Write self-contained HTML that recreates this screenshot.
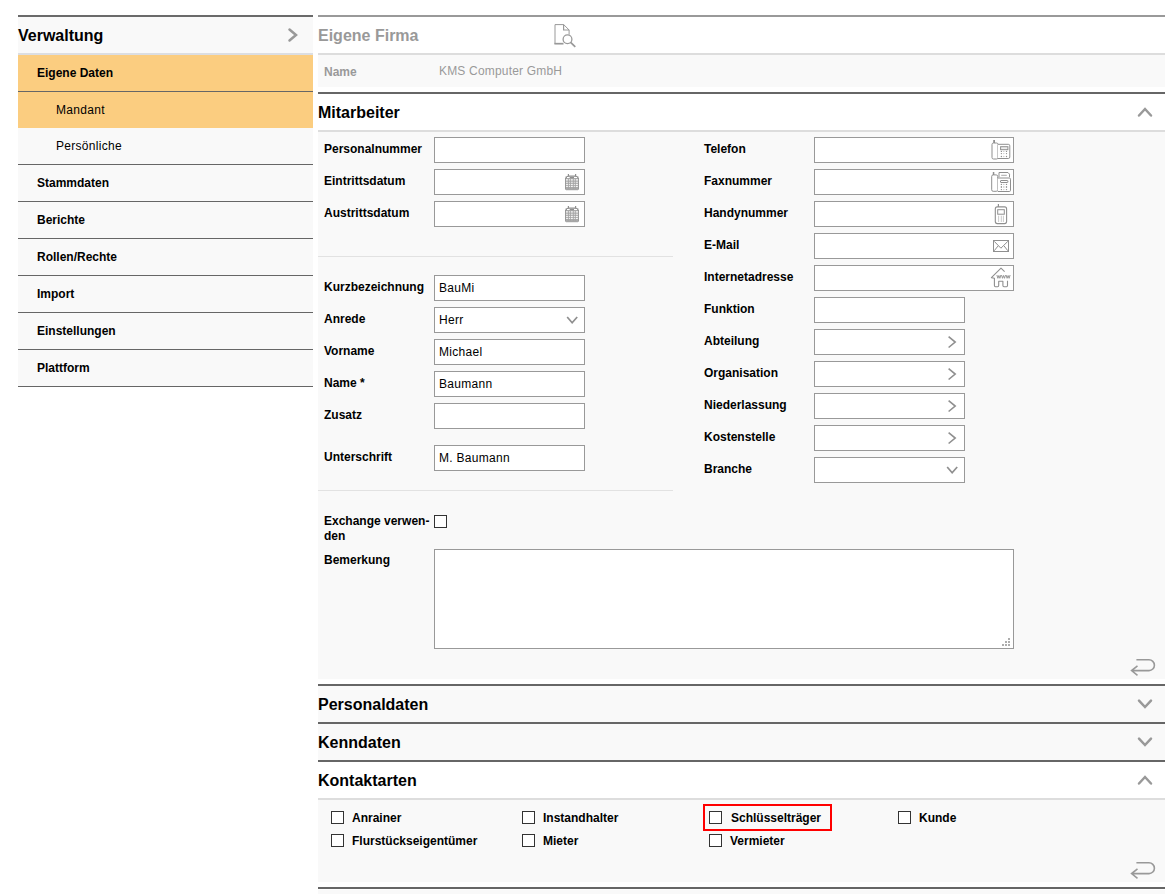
<!DOCTYPE html>
<html><head><meta charset="utf-8">
<style>
*{box-sizing:border-box;margin:0;padding:0}
html,body{width:1167px;height:894px;overflow:hidden;background:#fff}
body{position:relative;font-family:"Liberation Sans",sans-serif;color:#000;font-size:12px}
.a{position:absolute}
.sb{left:18px;width:295px}
.row{position:absolute;left:18px;width:295px;height:36px;line-height:36px;font-size:12px;background:#f9f9f9}
.row.b{font-weight:bold;padding-left:19px}
.row.l2{padding-left:38px;letter-spacing:0.3px}
.row.or{background:#fbcd80}
.hl{position:absolute;left:18px;width:295px;height:1px;background:#666}
.m{left:318px;width:847px}
.dk{position:absolute;left:318px;width:847px;height:2px;background:#666}
.lt{position:absolute;left:318px;width:847px;height:2px;background:#dddddd}
.f9{position:absolute;left:318px;width:847px;background:#f9f9f9}
.hd{position:absolute;left:318px;width:847px;height:36px;line-height:36px;padding-top:1px;font-size:16px;font-weight:bold}
.lb{position:absolute;height:26px;line-height:26px;font-weight:bold;font-size:12px;white-space:nowrap}
.in{position:absolute;height:26px;border:1px solid #999;background:#fff;line-height:24px;padding-left:4px;font-size:12px;letter-spacing:0.3px}
.w151{width:151px}.w200{width:200px}
.cb{position:absolute;width:13px;height:13px;border:1px solid #333;background:#fff}
.ct{position:absolute;font-weight:bold;font-size:12px;line-height:14px;white-space:nowrap}
svg{position:absolute;overflow:visible}
</style></head><body>

<!-- SIDEBAR -->
<div class="a sb" style="top:15px;height:2px;background:#6a6a6a"></div>
<div class="row" style="top:17px;font-size:16px;font-weight:bold;padding-top:1px">Verwaltung</div>
<svg style="left:286px;top:26px" width="14" height="18"><path d="M3.5 3.5L10 9L3.5 14.5" fill="none" stroke="#999" stroke-width="2.5" stroke-linecap="round"/></svg>
<div class="a sb" style="top:53px;height:2px;background:#dcdee2"></div>
<div class="row b or" style="top:55px">Eigene Daten</div>
<div class="hl" style="top:91px"></div>
<div class="row l2 or" style="top:92px">Mandant</div>
<div class="row l2" style="top:128px">Persönliche</div>
<div class="hl" style="top:164px"></div>
<div class="row b" style="top:165px">Stammdaten</div>
<div class="hl" style="top:201px"></div>
<div class="row b" style="top:202px">Berichte</div>
<div class="hl" style="top:238px"></div>
<div class="row b" style="top:239px">Rollen/Rechte</div>
<div class="hl" style="top:275px"></div>
<div class="row b" style="top:276px">Import</div>
<div class="hl" style="top:312px"></div>
<div class="row b" style="top:313px">Einstellungen</div>
<div class="hl" style="top:349px"></div>
<div class="row b" style="top:350px">Plattform</div>
<div class="hl" style="top:386px"></div>

<!-- MAIN -->
<div class="a m" style="top:15px;height:2px;background:#999"></div>
<div class="hd" style="top:17px;color:#999">Eigene Firma</div>
<svg style="left:554px;top:24px" width="24" height="24"><path d="M1 19.9V0.6H9.7L15.1 6V10.5" fill="none" stroke="#999" stroke-width="1"/><path d="M0.4 19.7H9.5" stroke="#999" stroke-width="1.7"/><path d="M9.6 0.6V6H15.1" fill="none" stroke="#999" stroke-width="1.2"/><circle cx="13.5" cy="15.2" r="4.4" fill="#fff" stroke="#999" stroke-width="1.3"/><path d="M16.6 18.3L21.3 22.9" stroke="#999" stroke-width="1.7"/></svg>
<div class="lt" style="top:53px"></div>
<div class="f9" style="top:55px;height:32px"></div>
<div class="lb" style="left:324px;top:59px;color:#999">Name</div>
<div class="a" style="left:439px;top:58px;height:26px;line-height:26px;color:#999;letter-spacing:0.18px">KMS Computer GmbH</div>

<div class="dk" style="top:92px"></div>
<div class="hd" style="top:94px">Mitarbeiter</div>
<svg style="left:1136px;top:105px" width="18" height="14"><path d="M3 10.5L9 4L15 10.5" fill="none" stroke="#999" stroke-width="2.5" stroke-linecap="round"/></svg>
<div class="lt" style="top:130px"></div>
<div class="f9" style="top:132px;height:547px"></div>

<!-- left column -->
<div class="lb" style="left:324px;top:136px">Personalnummer</div>
<div class="in w151" style="left:434px;top:137px"></div>
<div class="lb" style="left:324px;top:168px">Eintrittsdatum</div>
<div class="in w151" style="left:434px;top:169px"></div>
<div class="lb" style="left:324px;top:200px">Austrittsdatum</div>
<div class="in w151" style="left:434px;top:201px"></div>

<div class="a" style="left:318px;top:256px;width:355px;height:1px;background:#e2e2e2"></div>

<div class="lb" style="left:324px;top:274px">Kurzbezeichnung</div>
<div class="in w151" style="left:434px;top:275px">BauMi</div>
<div class="lb" style="left:324px;top:306px">Anrede</div>
<div class="in w151" style="left:434px;top:307px">Herr</div>
<svg style="left:566px;top:316px" width="12" height="9"><path d="M1.2 1L6.15 6.8L11.2 1" fill="none" stroke="#8f8f8f" stroke-width="1.7"/></svg>
<div class="lb" style="left:324px;top:338px">Vorname</div>
<div class="in w151" style="left:434px;top:339px">Michael</div>
<div class="lb" style="left:324px;top:370px">Name *</div>
<div class="in w151" style="left:434px;top:371px">Baumann</div>
<div class="lb" style="left:324px;top:402px">Zusatz</div>
<div class="in w151" style="left:434px;top:403px"></div>
<div class="lb" style="left:324px;top:444px">Unterschrift</div>
<div class="in w151" style="left:434px;top:445px">M. Baumann</div>

<div class="a" style="left:318px;top:490px;width:355px;height:1px;background:#e2e2e2"></div>

<div class="ct" style="left:324px;top:514px;line-height:15px">Exchange verwen-<br>den</div>
<div class="cb" style="left:434px;top:515px"></div>
<div class="lb" style="left:324px;top:547px">Bemerkung</div>
<div class="in" style="left:434px;top:549px;width:580px;height:100px"></div>

<!-- right column -->
<div class="lb" style="left:704px;top:136px">Telefon</div>
<div class="in w200" style="left:814px;top:137px"></div>
<div class="lb" style="left:704px;top:168px">Faxnummer</div>
<div class="in w200" style="left:814px;top:169px"></div>
<div class="lb" style="left:704px;top:200px">Handynummer</div>
<div class="in w200" style="left:814px;top:201px"></div>
<div class="lb" style="left:704px;top:232px">E-Mail</div>
<div class="in w200" style="left:814px;top:233px"></div>
<div class="lb" style="left:704px;top:264px">Internetadresse</div>
<div class="in w200" style="left:814px;top:265px"></div>
<div class="lb" style="left:704px;top:296px">Funktion</div>
<div class="in w151" style="left:814px;top:297px"></div>
<div class="lb" style="left:704px;top:328px">Abteilung</div>
<div class="in w151" style="left:814px;top:329px"></div>
<div class="lb" style="left:704px;top:360px">Organisation</div>
<div class="in w151" style="left:814px;top:361px"></div>
<div class="lb" style="left:704px;top:392px">Niederlassung</div>
<div class="in w151" style="left:814px;top:393px"></div>
<div class="lb" style="left:704px;top:424px">Kostenstelle</div>
<div class="in w151" style="left:814px;top:425px"></div>
<div class="lb" style="left:704px;top:456px">Branche</div>
<div class="in w151" style="left:814px;top:457px"></div>



<div class="dk" style="top:684px"></div>
<div class="f9" style="top:686px;height:36px"></div>
<div class="hd" style="top:686px">Personaldaten</div>
<div class="dk" style="top:722px"></div>
<div class="f9" style="top:724px;height:36px"></div>
<div class="hd" style="top:724px">Kenndaten</div>
<div class="dk" style="top:760px"></div>
<div class="hd" style="top:762px">Kontaktarten</div>
<div class="lt" style="top:798px"></div>
<div class="f9" style="top:800px;height:82px"></div>

<div class="cb" style="left:331px;top:811px"></div><div class="ct" style="left:352px;top:811px">Anrainer</div>
<div class="cb" style="left:331px;top:834px"></div><div class="ct" style="left:352px;top:834px">Flurstückseigentümer</div>
<div class="cb" style="left:522px;top:811px"></div><div class="ct" style="left:543px;top:811px">Instandhalter</div>
<div class="cb" style="left:522px;top:834px"></div><div class="ct" style="left:543px;top:834px">Mieter</div>
<div class="a" style="left:703px;top:804px;width:129px;height:27px;border:2px solid #f00"></div>
<div class="cb" style="left:709px;top:811px"></div><div class="ct" style="left:731px;top:811px">Schlüsselträger</div>
<div class="cb" style="left:709px;top:834px"></div><div class="ct" style="left:730px;top:834px">Vermieter</div>
<div class="cb" style="left:898px;top:811px"></div><div class="ct" style="left:919px;top:811px">Kunde</div>

<div class="dk" style="top:887px"></div>
<div class="f9" style="top:890px;height:4px"></div>

<!-- ICONS -->
<svg style="left:565px;top:174px" width="15" height="17"><path d="M0.6 15.2V4L3 2H11L13.4 4V15.2Q13.4 15.7 12.9 15.7H1.1Q0.6 15.7 0.6 15.2Z" fill="#fff" stroke="#8f8f8f"/><rect x="0.6" y="2.4" width="12.8" height="2.5" fill="#8f8f8f"/><rect x="2" y="3" width="2.7" height="1.1" fill="#fff"/><rect x="9" y="3" width="3.1" height="1.1" fill="#fff"/><rect x="1" y="4.9" width="12" height="4.4" fill="#e6e6e6"/><rect x="1" y="13.4" width="12" height="2" fill="#ababab"/><path d="M3.4 4.9V15M5.4 4.9V15M8.3 4.9V15M10.3 4.9V15M1 7.2H13M1 9.4H13M1 11.4H13M1 13.4H13" stroke="#a3a3a3" stroke-width="0.9"/><rect x="2.8" y="0" width="1.2" height="2.5" fill="#8f8f8f"/><rect x="10" y="0" width="1.2" height="2.5" fill="#8f8f8f"/></svg>
<svg style="left:565px;top:206px" width="15" height="17"><path d="M0.6 15.2V4L3 2H11L13.4 4V15.2Q13.4 15.7 12.9 15.7H1.1Q0.6 15.7 0.6 15.2Z" fill="#fff" stroke="#8f8f8f"/><rect x="0.6" y="2.4" width="12.8" height="2.5" fill="#8f8f8f"/><rect x="2" y="3" width="2.7" height="1.1" fill="#fff"/><rect x="9" y="3" width="3.1" height="1.1" fill="#fff"/><rect x="1" y="4.9" width="12" height="4.4" fill="#e6e6e6"/><rect x="1" y="13.4" width="12" height="2" fill="#ababab"/><path d="M3.4 4.9V15M5.4 4.9V15M8.3 4.9V15M10.3 4.9V15M1 7.2H13M1 9.4H13M1 11.4H13M1 13.4H13" stroke="#a3a3a3" stroke-width="0.9"/><rect x="2.8" y="0" width="1.2" height="2.5" fill="#8f8f8f"/><rect x="10" y="0" width="1.2" height="2.5" fill="#8f8f8f"/></svg>
<svg style="left:988px;top:138px" width="25" height="24"><rect x="4" y="5" width="6" height="16" rx="1.5" fill="#fff" stroke="#8f8f8f"/><rect x="5.2" y="2" width="1.8" height="3" fill="#8f8f8f"/><path d="M10 6.3H20.3A1.5 1.5 0 0 1 21.8 7.8V19A1.5 1.5 0 0 1 20.3 20.5H10" fill="#fff" stroke="#8f8f8f"/><rect x="12.6" y="8.7" width="7.3" height="3" fill="#eee" stroke="#8f8f8f"/><g fill="#8f8f8f"><circle cx="13.4" cy="13.4" r="0.7"/><circle cx="18.5" cy="13.4" r="0.7"/><circle cx="13.4" cy="15.6" r="0.7"/><circle cx="18.5" cy="15.6" r="0.7"/><circle cx="13.4" cy="18.5" r="0.7"/><circle cx="18.5" cy="18.5" r="0.7"/></g><g fill="#c8c8c8"><circle cx="15.8" cy="13.4" r="0.7"/><circle cx="15.8" cy="15.6" r="0.7"/><circle cx="15.8" cy="18.5" r="0.7"/></g></svg>
<svg style="left:988px;top:170px" width="25" height="24"><rect x="3.7" y="4.9" width="6" height="16.4" rx="1.5" fill="#fff" stroke="#8f8f8f"/><rect x="4.8" y="2" width="1.5" height="3" fill="#8f8f8f"/><path d="M11 7.2V2.5H20L21.5 4.2V7.2" fill="#fff" stroke="#8f8f8f"/><rect x="13.2" y="4.8" width="5.6" height="1" fill="#aaa"/><path d="M9.7 8H21.3A1.2 1.2 0 0 1 22.5 9.2V20.3A1.2 1.2 0 0 1 21.3 21.5H9.7" fill="#fff" stroke="#8f8f8f"/><rect x="12.5" y="10.5" width="7.4" height="2" rx="0.5" fill="#fff" stroke="#8f8f8f"/><g fill="#8f8f8f"><circle cx="13.4" cy="14.4" r="0.7"/><circle cx="18.5" cy="14.4" r="0.7"/><rect x="12.8" y="16.2" width="1.2" height="1.6"/><rect x="17.9" y="16.2" width="1.2" height="1.6"/><circle cx="13.4" cy="19.6" r="0.7"/><circle cx="18.5" cy="19.6" r="0.7"/></g><g fill="#c8c8c8"><circle cx="15.8" cy="14.4" r="0.7"/><rect x="15.2" y="16.2" width="1.2" height="1.6"/><circle cx="15.8" cy="19.6" r="0.7"/></g></svg>
<svg style="left:990px;top:202px" width="22" height="24"><rect x="5.3" y="4.9" width="11.3" height="16.7" rx="2" fill="#fff" stroke="#8f8f8f" stroke-width="1.1"/><rect x="7.8" y="2" width="1.2" height="3" fill="#8f8f8f"/><rect x="7.7" y="7.7" width="6.6" height="4.5" fill="#fff" stroke="#8f8f8f"/><path d="M8.6 13.7V20M11.3 13.7V20M13.4 13.7V20" stroke="#c4c4c4" stroke-width="0.9"/></svg>
<svg style="left:988px;top:234px" width="26" height="24"><rect x="5.5" y="6.5" width="15" height="11" fill="#fff" stroke="#8f8f8f"/><path d="M6.2 7.3L12.9 14.2L19.9 7.3M6.2 16.8L10 12M19.9 16.8L16.1 12" fill="none" stroke="#8f8f8f" stroke-width="1"/></svg>
<svg style="left:986px;top:265px" width="28" height="26"><path d="M18.6 6.6L15 3.2L5.4 12.6L8.4 13.2V20.6Q8.4 21.7 9.5 21.7H11.6Q12.7 21.7 12.7 20.6V16.2H16.9V20.6Q16.9 21.7 18 21.7H20.4Q21.5 21.7 21.5 20.6V15.8" fill="none" stroke="#8f8f8f" stroke-width="1.1" stroke-linejoin="round"/><path d="M10.9 10L11.9 13.3L12.9 10.5L13.9 13.3L14.9 10M15.5 10L16.5 13.3L17.5 10.5L18.5 13.3L19.5 10M20.1 10L21.1 13.3L22.1 10.5L23.1 13.3L24.1 10" fill="none" stroke="#8f8f8f" stroke-width="0.9"/></svg>
<svg style="left:946px;top:334px" width="12" height="16"><path d="M2.6 2.7L9.2 8.1L2.6 13.5" fill="none" stroke="#8f8f8f" stroke-width="1.6"/></svg>
<svg style="left:946px;top:366px" width="12" height="16"><path d="M2.6 2.7L9.2 8.1L2.6 13.5" fill="none" stroke="#8f8f8f" stroke-width="1.6"/></svg>
<svg style="left:946px;top:398px" width="12" height="16"><path d="M2.6 2.7L9.2 8.1L2.6 13.5" fill="none" stroke="#8f8f8f" stroke-width="1.6"/></svg>
<svg style="left:946px;top:430px" width="12" height="16"><path d="M2.6 2.7L9.2 8.1L2.6 13.5" fill="none" stroke="#8f8f8f" stroke-width="1.6"/></svg>
<svg style="left:946px;top:466px" width="12" height="9"><path d="M1.2 1L6.15 6.8L11.2 1" fill="none" stroke="#8f8f8f" stroke-width="1.7"/></svg>
<svg style="left:1002px;top:638px" width="8" height="8" fill="#adadad"><rect x="6" y="0" width="2" height="2"/><rect x="3" y="3" width="2" height="2"/><rect x="6" y="3" width="2" height="2"/><rect x="0" y="6" width="2" height="2"/><rect x="3" y="6" width="2" height="2"/><rect x="6" y="6" width="2" height="2"/></svg>
<svg style="left:1125px;top:650px" width="40" height="30"><path d="M11.4 9.8H24A5.4 5.4 0 0 1 24 20.6H6.7M12.5 15.9L6.6 20.6L12.5 25.3" fill="none" stroke="#999" stroke-width="1.6"/></svg>
<svg style="left:1125px;top:853px" width="40" height="30"><path d="M11.4 9.8H24A5.4 5.4 0 0 1 24 20.6H6.7M12.5 15.9L6.6 20.6L12.5 25.3" fill="none" stroke="#999" stroke-width="1.6"/></svg>
<svg style="left:1136px;top:697px" width="18" height="14"><path d="M3 3.6L9 10L15 3.6" fill="none" stroke="#999" stroke-width="2.5" stroke-linecap="round"/></svg>
<svg style="left:1136px;top:735px" width="18" height="14"><path d="M3 3.6L9 10L15 3.6" fill="none" stroke="#999" stroke-width="2.5" stroke-linecap="round"/></svg>
<svg style="left:1136px;top:773px" width="18" height="14"><path d="M3 10.5L9 4L15 10.5" fill="none" stroke="#999" stroke-width="2.5" stroke-linecap="round"/></svg>
<!-- ICONS_END -->
</body></html>
